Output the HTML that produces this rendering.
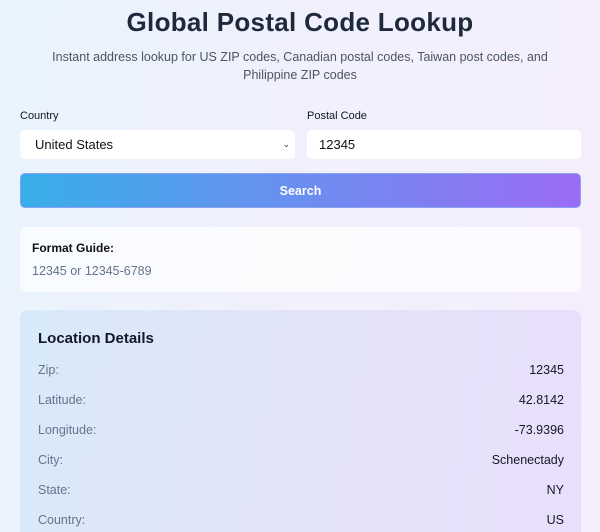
<!DOCTYPE html>
<html><head><style>
*{box-sizing:border-box;margin:0;padding:0}
html,body{width:600px;height:532px;overflow:hidden}
body{font-family:"Liberation Sans",sans-serif;background:linear-gradient(100deg,#e9f4fd 0%,#f1f0fc 50%,#f5eefc 100%);color:#0f172a;position:relative}
h1{position:absolute;top:7px;left:0;width:600px;text-align:center;font-size:26px;font-weight:bold;color:#1e293b;letter-spacing:0.3px}
.sub{position:absolute;top:48px;left:40px;width:520px;text-align:center;font-size:12.5px;line-height:18px;color:#4b5563}
.lab{position:absolute;top:110px;font-size:11px;color:#111827}
.inp{position:absolute;top:130px;height:29px;background:#fff;border-radius:5px;font-size:13px;line-height:29px;color:#111}
.btn{position:absolute;left:20px;top:173px;width:561px;height:35px;border-radius:5px;background:linear-gradient(90deg,#38aee9,#6b8ef0 50%,#9a6cf5);color:#fff;font-weight:bold;font-size:12.5px;text-align:center;line-height:35px;border:1px solid #8aa0f0}
.fg{position:absolute;left:20px;top:227px;width:561px;height:65px;border-radius:6px;background:rgba(255,255,255,0.7)}
.det{position:absolute;left:20px;top:310px;width:561px;height:240px;border-radius:8px;background:linear-gradient(100deg,#d8eafa 0%,#e3e4f8 50%,#e9dffb 100%)}
.row{position:absolute;left:18px;right:17px;font-size:12.5px;height:16px}
.row span:first-child{color:#64748b}
.row span:last-child{position:absolute;right:0;color:#111827}
</style></head><body>
<h1>Global Postal Code Lookup</h1>
<div class="sub">Instant address lookup for US ZIP codes, Canadian postal codes, Taiwan post codes, and Philippine ZIP codes</div>
<div class="lab" style="left:20px">Country</div>
<div class="lab" style="left:307px">Postal Code</div>
<div class="inp" style="left:20px;width:275px;padding-left:15px">United States<span style="position:absolute;right:5px;top:0;font-size:9px;color:#333">&#8964;</span></div>
<div class="inp" style="left:307px;width:274px;padding-left:12px">12345</div>
<div class="btn">Search</div>
<div class="fg"><div style="position:absolute;left:12px;top:14px;font-size:12px;font-weight:bold;color:#111">Format Guide:</div><div style="position:absolute;left:12px;top:37px;font-size:12.5px;color:#64748b">12345 or 12345-6789</div></div>
<div class="det">
<div style="position:absolute;left:18px;top:20px;font-size:15px;font-weight:bold;color:#111827">Location Details</div>
<div class="row" style="top:53px"><span>Zip:</span><span>12345</span></div>
<div class="row" style="top:83px"><span>Latitude:</span><span>42.8142</span></div>
<div class="row" style="top:113px"><span>Longitude:</span><span>-73.9396</span></div>
<div class="row" style="top:143px"><span>City:</span><span>Schenectady</span></div>
<div class="row" style="top:173px"><span>State:</span><span>NY</span></div>
<div class="row" style="top:203px"><span>Country:</span><span>US</span></div>
</div>
</body></html>
